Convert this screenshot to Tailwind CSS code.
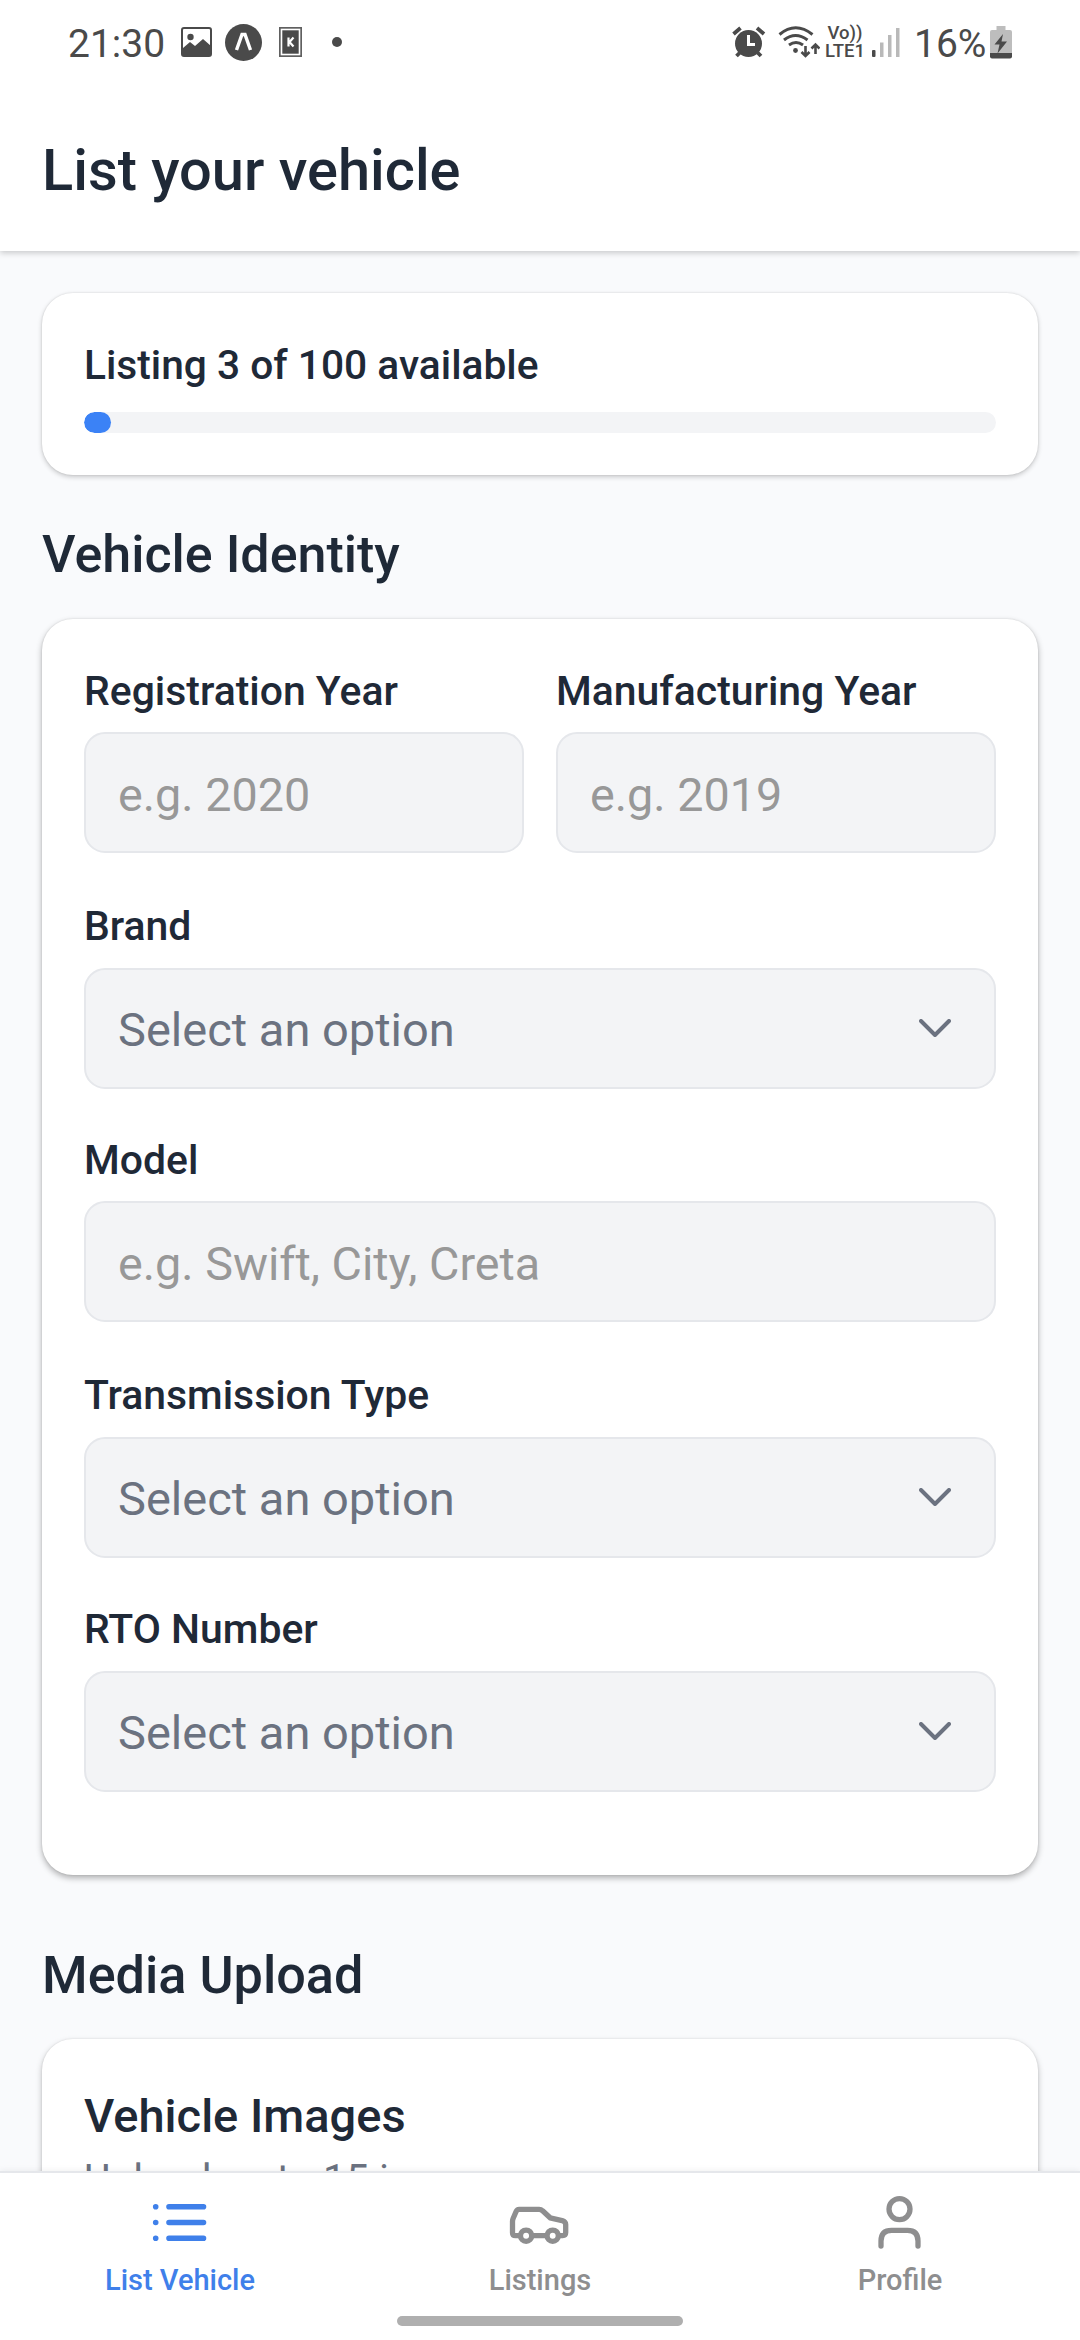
<!DOCTYPE html>
<html lang="en">
<head>
<meta charset="utf-8">
<meta name="viewport" content="width=device-width">
<title>List your vehicle</title>
<script src="https://cdn.jsdelivr.net/npm/@tailwindcss/browser@4"></script>
</head>
<body class="bg-[#f9fafc] font-['Roboto',sans-serif] text-[#1f2937]">
<div class="flex h-[2340px] w-[1080px] flex-col overflow-hidden">

  <header class="relative z-10 h-[251px] shrink-0 bg-white shadow-[0_2px_6px_rgba(0,0,0,0.2)]">
    <div class="flex h-[84px] items-center pl-[68px] text-[39px] text-[#4a4a4a]">
      <span class="w-[98px] pt-[3px] leading-[84px]">21:30</span>
      <svg class="ml-[15px]" width="31" height="30" viewBox="0 0 31 30"><rect x="1" y="1" width="29" height="28" rx="2" fill="none" stroke="#4a4a4a" stroke-width="2"/><circle cx="9.500" cy="10" r="3.200" fill="#4a4a4a"/><path d="M2 21l7-6 5 4 8-7 8 7v9H2z" fill="#4a4a4a"/></svg>
      <svg class="ml-[13px]" width="37" height="37" viewBox="0 0 37 37"><circle cx="18.500" cy="18.500" r="18.500" fill="#4a4a4a"/><path d="M11.500 26l5.500-15.500h3L25.500 26" fill="none" stroke="#fff" stroke-width="3.400"/></svg>
      <svg class="ml-[17px]" width="23" height="30" viewBox="0 0 23 30"><rect width="23" height="30" fill="#606060"/><rect x="2.500" y="2.500" width="18" height="25" fill="#4a4a4a" stroke="#fff" stroke-width="1.600"/><path d="M9.500 10.500v9M14.500 10.500l-4 4.500 4 4.500" stroke="#fff" stroke-width="2.200" fill="none"/></svg>
      <span class="ml-[30px] size-[10px] rounded-full bg-[#4a4a4a]"></span>
      <svg class="ml-[390px]" width="34" height="32" viewBox="0 0 34 32"><circle cx="16.500" cy="17.500" r="13.500" fill="#4a4a4a"/><path d="M1.500 8l7-6M32 8l-7-6M4.500 30l5-5M29 30l-5-5" stroke="#4a4a4a" stroke-width="3.800"/><path d="M16.500 9v9.500h6.500" fill="none" stroke="#fff" stroke-width="3"/></svg>
      <svg class="ml-[12px]" width="42" height="32" viewBox="0 0 42 32"><g fill="none" stroke="#4a4a4a" stroke-width="3"><path d="M1.500 8.500Q17.500-5 34.500 8.500M6 14q11.500-9 23.500 0M11 19q7-5 14 0"/><path stroke-width="2.600" d="M27.500 20v10M23.500 26l4 4 4-4M37.500 28V18M33.500 22.500l4-4 4 4"/></g><circle cx="17.500" cy="24.500" r="2.400" fill="#4a4a4a"/></svg>
      <div class="ml-[4px] flex h-[36px] w-[42px] flex-col items-center text-[18.500px] font-medium leading-[18px]"><span class="whitespace-nowrap">Vo))</span><span class="whitespace-nowrap">LTE1</span></div>
      <svg class="ml-[6px]" width="28" height="30" viewBox="0 0 28 30"><rect x="0" y="23" width="3.500" height="7" rx="1" fill="#4a4a4a"/><path d="M8 15.500h3.500V30H8zM16 8h3.500v22H16zM24 1h3.500v29H24z" fill="#b9b9b9"/></svg>
      <span class="ml-[14px] w-[72px] whitespace-nowrap pt-[3px] leading-[84px]">16%</span>
      <svg class="ml-[4px]" width="22" height="33" viewBox="0 0 22 33"><path d="M6.500 0h9v4H20q2 0 2 2v21H0V6q0-2 2-2h4.500z" fill="#bdbdbd"/><path d="M0 27h22v3.500q0 2-2 2H2q-2 0-2-2z" fill="#4a4a4a"/><path d="M13 8L4.500 18.500h5L7.500 27.500l9.500-12h-5.500L13 8z" fill="#4a4a4a"/></svg>
    </div>
    <h1 class="flex h-[167px] items-center pl-[42px] pt-[6px] text-[57.75px] font-medium">List your vehicle</h1>
  </header>

  <main class="min-h-0 flex-1 overflow-hidden px-[42px] pt-[42px]">
    <section class="h-[182px] rounded-[31px] bg-white p-[42px] shadow-[0_2px_5px_rgba(0,0,0,0.2),0_0_2px_rgba(0,0,0,0.12)]">
      <p class="text-[40.700px] font-medium leading-[60px]">Listing 3 of 100 available</p>
      <div class="mt-[17px] h-[21px] overflow-hidden rounded-full bg-[#f3f4f6]"><div class="h-full rounded-full bg-[#3b82f6]" style="width:3%"></div></div>
    </section>

    <h2 class="mb-[29px] mt-[45px] text-[52px] font-medium leading-[70px]">Vehicle Identity</h2>

    <section class="flex h-[1256px] flex-col rounded-[31px] bg-white p-[42px] shadow-[0_3px_6px_rgba(0,0,0,0.3),0_0_2px_rgba(0,0,0,0.12)]">
      <div class="flex h-[235px] gap-[32px]">
        <label class="flex flex-1 flex-col"><span class="text-[40.900px] font-medium leading-[60px]">Registration Year</span><span class="mt-[11px] flex h-[121px] items-center rounded-[21px] border-2 border-[#e5e7eb] bg-[#f3f4f6] px-[32px] pt-[5px] text-[46.700px] text-[#989898]">e.g. 2020</span></label>
        <label class="flex flex-1 flex-col"><span class="text-[40.900px] font-medium leading-[60px]">Manufacturing Year</span><span class="mt-[11px] flex h-[121px] items-center rounded-[21px] border-2 border-[#e5e7eb] bg-[#f3f4f6] px-[32px] pt-[5px] text-[46.700px] text-[#989898]">e.g. 2019</span></label>
      </div>
      <label class="flex h-[234px] flex-col"><span class="text-[40.900px] font-medium leading-[60px]">Brand</span><span class="mt-[12px] flex h-[121px] items-center justify-between rounded-[21px] border-2 border-[#e5e7eb] bg-[#f3f4f6] pl-[32px] pr-[43px] pt-[3px] text-[47px] text-[#6b7280]">Select an option<svg class="mb-[5px]" width="32" height="18" viewBox="0 0 32 18" fill="none" stroke="#6b7280" stroke-width="4" stroke-linecap="round" stroke-linejoin="round"><path d="M2 2l14 14L30 2"/></svg></span></label>
      <label class="flex h-[235px] flex-col"><span class="text-[40.900px] font-medium leading-[60px]">Model</span><span class="mt-[11px] flex h-[121px] items-center rounded-[21px] border-2 border-[#e5e7eb] bg-[#f3f4f6] px-[32px] pt-[5px] text-[46.700px] text-[#989898]">e.g. Swift, City, Creta</span></label>
      <label class="flex h-[234px] flex-col"><span class="text-[40.900px] font-medium leading-[60px]">Transmission Type</span><span class="mt-[12px] flex h-[121px] items-center justify-between rounded-[21px] border-2 border-[#e5e7eb] bg-[#f3f4f6] pl-[32px] pr-[43px] pt-[3px] text-[47px] text-[#6b7280]">Select an option<svg class="mb-[5px]" width="32" height="18" viewBox="0 0 32 18" fill="none" stroke="#6b7280" stroke-width="4" stroke-linecap="round" stroke-linejoin="round"><path d="M2 2l14 14L30 2"/></svg></span></label>
      <label class="flex flex-col"><span class="text-[40.900px] font-medium leading-[60px]">RTO Number</span><span class="mt-[12px] flex h-[121px] items-center justify-between rounded-[21px] border-2 border-[#e5e7eb] bg-[#f3f4f6] pl-[32px] pr-[43px] pt-[3px] text-[47px] text-[#6b7280]">Select an option<svg class="mb-[5px]" width="32" height="18" viewBox="0 0 32 18" fill="none" stroke="#6b7280" stroke-width="4" stroke-linecap="round" stroke-linejoin="round"><path d="M2 2l14 14L30 2"/></svg></span></label>
    </section>

    <h2 class="mb-[28px] mt-[66px] text-[52.200px] font-medium leading-[70px]">Media Upload</h2>

    <section class="h-[400px] rounded-[31px] bg-white p-[42px] shadow-[0_3px_6px_rgba(0,0,0,0.26),0_0_2px_rgba(0,0,0,0.1)]">
      <h3 class="text-[47px] font-medium leading-[70px]">Vehicle Images</h3>
      <p class="text-[40.700px] leading-[56px] text-[#6b7280]">Upload up to 15 images</p>
    </section>
  </main>

  <nav class="relative z-10 flex h-[169px] shrink-0 flex-col items-center border-t-2 border-[#e5e7eb] bg-white shadow-[0_-1px_6px_rgba(0,0,0,0.06)]">
    <div class="grid h-[143px] w-full grid-cols-3 text-[29px] font-medium leading-[36px] text-[#8e8e8f]">
      <a class="flex flex-col items-center text-[#3f80ea]"><svg class="mt-[15px]" width="68" height="68" viewBox="146 2188 68 68" fill="none" stroke="currentColor" stroke-width="5.600" stroke-linecap="round"><path d="M169 2206.800h34.500M169 2222.500h34.500M169 2238.200h34.500"/><path d="M155.700 2206.800h.010M155.700 2222.500h.010M155.700 2238.200h.010"/></svg><span class="mt-[6px]">List Vehicle</span></a>
      <a class="flex flex-col items-center"><svg class="mt-[15px]" width="68" height="68" viewBox="506 2188 68 68" fill="none" stroke="currentColor" stroke-width="5.300" stroke-linejoin="round" stroke-linecap="round"><path d="M519 2235.700h-3.500q-3 0-3-3V2221.500q0-1.500.600-3l3-7q.900-2.200 3-2.200h20q2 0 3.500 1.500l7.500 7 12 2.800q3.600 1.200 3.600 4v8q0 3-3 3h-3M533 2235.700h13"/><circle cx="526.100" cy="2235.700" r="5.600"/><circle cx="552.700" cy="2235.700" r="5.600"/></svg><span class="mt-[6px]">Listings</span></a>
      <a class="flex flex-col items-center"><svg class="mt-[15px]" width="68" height="68" viewBox="866 2188 68 68" fill="none" stroke="currentColor" stroke-width="5.300" stroke-linecap="round"><circle cx="899.500" cy="2209.100" r="10.500"/><path d="M881 2246v-5q0-10.600 10.600-10.600h15.800q10.600 0 10.600 10.600v5"/></svg><span class="mt-[6px]">Profile</span></a>
    </div>
    <div class="h-[10px] w-[286px] rounded-full bg-[#afafaf]"></div>
  </nav>
</div>
</body>
</html>
